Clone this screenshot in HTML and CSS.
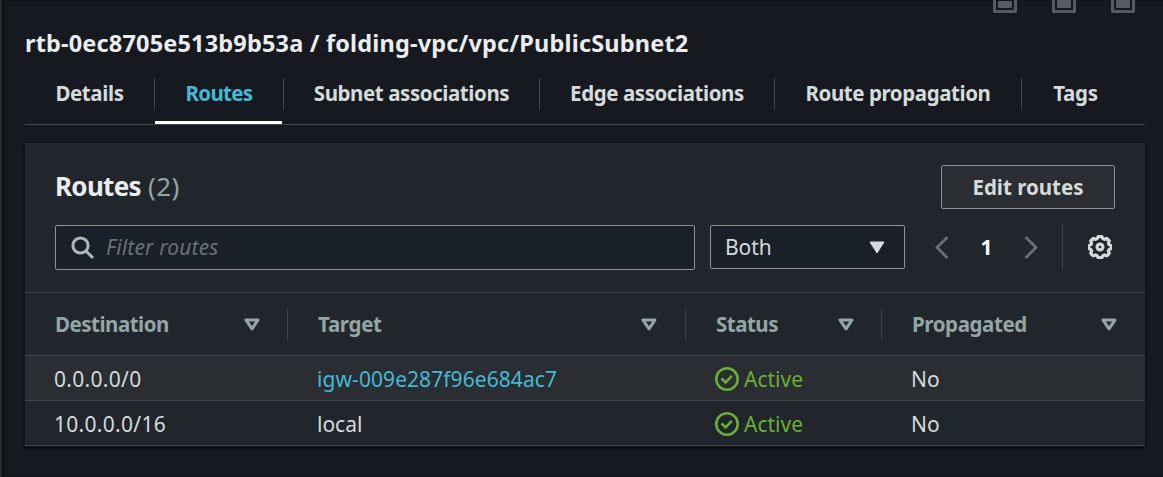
FILE: index.html
```html
<!DOCTYPE html>
<html lang="en">
<head>
<meta charset="utf-8">
<title>Route table</title>
<link rel="stylesheet" href="styles.css">
</head>
<body>
<svg class="defs" aria-hidden="true">
  <symbol id="sort" viewBox="0 0 16 13"><path d="M2 2h12L8 10.8z" fill="none" stroke="currentColor" stroke-width="3.1" stroke-linejoin="round"/></symbol>
  <symbol id="ok" viewBox="0 0 24 24"><circle cx="12" cy="12" r="10.7" fill="none" stroke="currentColor" stroke-width="2.6"/><path d="M6.5 11.4l4 4 6.4-6.6" fill="none" stroke="currentColor" stroke-width="2.6"/></symbol>
</svg>
<div class="page">
  <div class="layout-icons">
    <svg viewBox="0 0 24 24"><path d="M1.5-2v23.5h21V-2" class="frame"/><rect x="5" y="11" width="14" height="7" rx="1"/></svg>
    <svg viewBox="0 0 24 24"><path d="M1.5-2v23.5h21V-2" class="frame"/><rect x="5" y="4" width="14" height="14" rx="1"/></svg>
    <svg viewBox="0 0 24 24"><path d="M1.5-2v23.5h21V-2" class="frame"/><rect x="5" y="4" width="14" height="14" rx="1"/></svg>
  </div>
  <h1 class="title">rtb-0ec8705e513b9b53a / folding-vpc/vpc/PublicSubnet2</h1>
  <nav class="tabs">
    <a class="tab tab-details"><span>Details</span></a>
    <a class="tab tab-routes active"><span>Routes</span></a>
    <a class="tab tab-subnet"><span>Subnet associations</span></a>
    <a class="tab tab-edge"><span>Edge associations</span></a>
    <a class="tab tab-prop"><span>Route propagation</span></a>
    <a class="tab tab-tags"><span>Tags</span></a>
  </nav>
  <section class="card">
    <header class="card-head">
      <h2 class="heading">Routes <span class="count">(2)</span></h2>
      <button class="edit">Edit routes</button>
    </header>
    <div class="tools">
      <div class="search">
        <svg viewBox="0 0 24 24" class="lens"><circle cx="9.5" cy="9.5" r="7.6"/><path d="M15 15l7 7"/></svg>
        <span class="placeholder">Filter routes</span>
      </div>
      <div class="select"><span>Both</span><svg viewBox="0 0 16 13"><path d="M1 1h14L8 12z"/></svg></div>
      <div class="pager">
        <svg viewBox="0 0 14 23"><path d="M12.5 1L2 11.5 12.5 22"/></svg>
        <b>1</b>
        <svg viewBox="0 0 14 23"><path d="M1.5 1L12 11.5 1.5 22"/></svg>
      </div>
      <div class="settings">
        <svg viewBox="-12 -12 24 24"><path d="M-1.9-10.4h3.8l1.1 2.2 1.5.5 2.3-.9 2.5 2.5-.9 2.3.6 1.4 2.1 1v3l-2.1 1-.6 1.4.9 2.3-2.5 2.5-2.3-.9-1.5.5-1.1 2.2h-3.8l-1.1-2.2-1.5-.5-2.3.9-2.5-2.5.9-2.3-.6-1.4-2.1-1v-3l2.1-1 .6-1.4-.9-2.3 2.5-2.5 2.3.9 1.5-.5z"/><circle r="2.9"/></svg>
      </div>
    </div>
    <div class="row head">
      <div class="cell"><span class="h-dest">Destination</span><svg><use href="#sort"/></svg></div>
      <div class="cell"><span class="h-target">Target</span><svg><use href="#sort"/></svg></div>
      <div class="cell"><span class="h-status">Status</span><svg><use href="#sort"/></svg></div>
      <div class="cell"><span class="h-prop">Propagated</span><svg><use href="#sort"/></svg></div>
    </div>
    <div class="row body hover">
      <div class="cell"><span class="ip-a">0.0.0.0/0</span></div>
      <div class="cell"><a class="link">igw-009e287f96e684ac7</a></div>
      <div class="cell status"><svg><use href="#ok"/></svg><span>Active</span></div>
      <div class="cell"><span class="no">No</span></div>
    </div>
    <div class="row body">
      <div class="cell"><span class="ip-b">10.0.0.0/16</span></div>
      <div class="cell"><span class="local">local</span></div>
      <div class="cell status"><svg><use href="#ok"/></svg><span>Active</span></div>
      <div class="cell"><span class="no">No</span></div>
    </div>
  </section>
</div>
</body>
</html>
```
FILE: styles.css
```css
* { box-sizing: border-box; }
body { margin: 0; background: #16191f; color: #d5dbdb; font: 21px/30px "Noto Sans", "Open Sans", sans-serif; overflow: hidden; }
.defs { position: absolute; width: 0; height: 0; }
.page { height: 477px; border-left: 2px solid #2a2a2c; box-shadow: inset 2px 0 2px #0c0e12; padding: 0 18px 0 23px; }
.layout-icons { height: 27px; display: flex; justify-content: flex-end; gap: 35px; padding-right: 10px; }
.layout-icons svg { width: 24px; height: 24px; margin-top: -10px; fill: #545b64; flex: none; }
.layout-icons .frame { fill: none; stroke: #545b64; stroke-width: 3; stroke-linejoin: round; }
.title { margin: 0; font-size: 23.5px; line-height: 32px; height: 34px; font-weight: 700; letter-spacing: 0.17px; color: #eaeded; white-space: nowrap; }
.tabs { display: flex; height: 64px; border-bottom: 1px solid #414750; padding-top: 17px; font-size: 20.5px; font-weight: 700; letter-spacing: -0.43px; white-space: nowrap; }
.tab { display: flex; justify-content: center; height: 32px; line-height: 31px; border-right: 1px solid #414750; }
.tab-details { width: 130px; letter-spacing: -0.4px; }
.tab-routes { width: 129px; letter-spacing: -0.7px; }
.tab-subnet { width: 256px; }
.tab-edge { width: 235px; }
.tab-prop { width: 247px; }
.tab-tags { width: 107px; border: 0; letter-spacing: -0.3px; }
.active { color: #44b9d6; position: relative; }
.active::after { content: ""; position: absolute; left: 0; right: 1px; top: 43px; height: 3px; background: #fff; }
.card { margin-top: 18px; height: 303px; background: #21252c; box-shadow: 0 0 0 1px #111418, 0 2px 3px #000; border-top: 1px solid #2a2d31; }
.card-head { display: flex; justify-content: space-between; padding: 21px 30px 0; height: 81px; }
.heading { margin: 0; font-size: 26px; line-height: 42px; font-weight: 700; letter-spacing: -0.7px; color: #eaeded; }
.count { color: #95a5a6; font-weight: 400; letter-spacing: 0.5px; margin-left: 1px; }
.edit { width: 174px; height: 44px; padding: 0; background: #2a2d31; border: 1px solid #879596; border-radius: 2px; color: #d5dbdb; font: 700 20.5px/40px "Noto Sans", sans-serif; letter-spacing: 0; }
.tools { display: flex; height: 67px; padding-left: 30px; }
.search { width: 640px; height: 45px; display: flex; align-items: center; background: #1a2029; border: 1px solid #879596; border-radius: 2px; padding-left: 15px; }
.lens { width: 24px; height: 24px; fill: none; stroke: #aab7b8; stroke-width: 3; }
.placeholder { margin-left: 11px; padding-bottom: 2px; font-style: italic; color: #687078; letter-spacing: 0.15px; }
.select { width: 195px; height: 44px; margin-left: 15px; display: flex; align-items: center; justify-content: space-between; background: #1a2029; border: 1px solid #879596; border-radius: 2px; padding: 0 19px 0 14px; }
.select span { letter-spacing: -0.1px; padding-bottom: 1px; }
.select svg { width: 16px; height: 13px; fill: #d5dbdb; stroke: #d5dbdb; stroke-linejoin: round; }
.pager { width: 157px; height: 44px; padding: 0 24px 0 30px; display: flex; align-items: center; justify-content: space-between; color: #fff; }
.pager b { padding-bottom: 1px; }
.pager svg { width: 14px; height: 23px; fill: none; stroke: #687078; stroke-width: 2.8; }
.settings { height: 44px; border-left: 1px solid #414750; padding-left: 25px; display: flex; align-items: center; }
.settings svg { width: 24px; height: 24px; fill: none; stroke: #d5dbdb; stroke-width: 3.2; stroke-linejoin: round; }
.row { display: grid; grid-template-columns: 263px 398px 196px 263px; border-top: 1px solid #414750; white-space: nowrap; }
.head { height: 63px; padding-top: 16px; color: #95a5a6; font-size: 20.5px; font-weight: 700; letter-spacing: -0.5px; }
.head .cell { height: 31px; display: flex; align-items: center; justify-content: space-between; padding: 0 27px 0 30px; border-right: 1px solid #414750; }
.head .cell:nth-child(2) { padding-right: 28px; }
.head .cell:last-child { border: 0; padding-right: 28px; }
.head span { padding-bottom: 2px; }
.h-target { letter-spacing: -0.3px; }
.h-prop { letter-spacing: -0.4px; }
.head svg { width: 16px; height: 13px; }
.body { height: 45px; }
.body .cell { display: flex; align-items: center; padding: 2px 0 0 29px; }
.hover { background: #2a2d31; }
.body:last-child { height: 46px; border-bottom: 1px solid #414750; }
.ip-a { letter-spacing: 0.3px; }
.ip-b { letter-spacing: 0.3px; }
.link { color: #44b9d6; letter-spacing: 0.07px; }
.status { color: #6aaf35; }
.status svg { width: 24px; height: 24px; margin-right: 5px; }
```
